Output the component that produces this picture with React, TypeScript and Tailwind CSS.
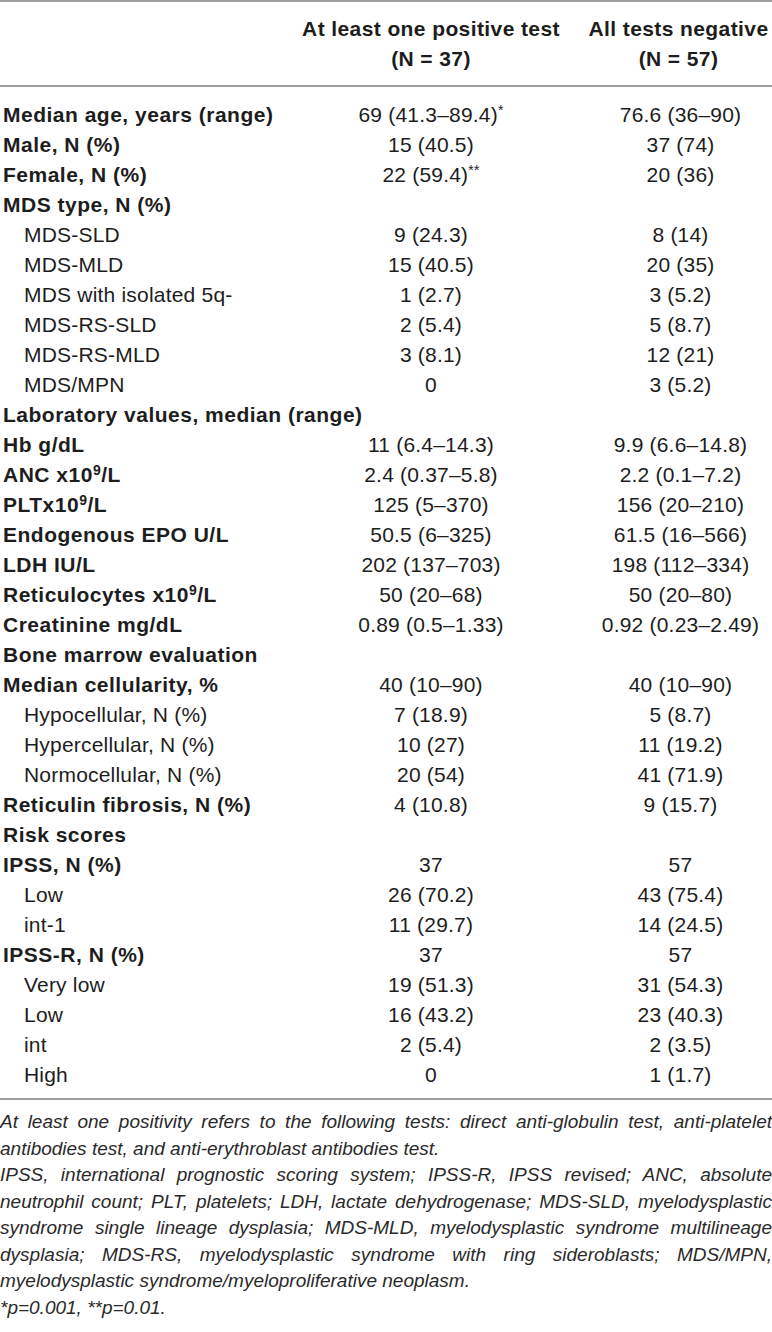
type Row = {
	label: React.ReactNode;
	a?: React.ReactNode;
	b?: React.ReactNode;
	bold?: boolean;
	indent?: boolean;
};

const Sup9 = () => <sup className="text-[14px]">9</sup>;
const Star = ({ n }: { n: string }) => <sup className="text-[14px]">{n}</sup>;

const rows: Row[] = [
	{ label: "Median age, years (range)", a: <>69 (41.3–89.4)<Star n="*" /></>, b: "76.6 (36–90)", bold: true },
	{ label: "Male, N (%)", a: "15 (40.5)", b: "37 (74)", bold: true },
	{ label: "Female, N (%)", a: <>22 (59.4)<Star n="**" /></>, b: "20 (36)", bold: true },
	{ label: "MDS type, N (%)", bold: true },
	{ label: "MDS-SLD", a: "9 (24.3)", b: "8 (14)", indent: true },
	{ label: "MDS-MLD", a: "15 (40.5)", b: "20 (35)", indent: true },
	{ label: "MDS with isolated 5q-", a: "1 (2.7)", b: "3 (5.2)", indent: true },
	{ label: "MDS-RS-SLD", a: "2 (5.4)", b: "5 (8.7)", indent: true },
	{ label: "MDS-RS-MLD", a: "3 (8.1)", b: "12 (21)", indent: true },
	{ label: "MDS/MPN", a: "0", b: "3 (5.2)", indent: true },
	{ label: "Laboratory values, median (range)", bold: true },
	{ label: "Hb g/dL", a: "11 (6.4–14.3)", b: "9.9 (6.6–14.8)", bold: true },
	{ label: <>ANC x10<Sup9 />/L</>, a: "2.4 (0.37–5.8)", b: "2.2 (0.1–7.2)", bold: true },
	{ label: <>PLTx10<Sup9 />/L</>, a: "125 (5–370)", b: "156 (20–210)", bold: true },
	{ label: "Endogenous EPO U/L", a: "50.5 (6–325)", b: "61.5 (16–566)", bold: true },
	{ label: "LDH IU/L", a: "202 (137–703)", b: "198 (112–334)", bold: true },
	{ label: <>Reticulocytes x10<Sup9 />/L</>, a: "50 (20–68)", b: "50 (20–80)", bold: true },
	{ label: "Creatinine mg/dL", a: "0.89 (0.5–1.33)", b: "0.92 (0.23–2.49)", bold: true },
	{ label: "Bone marrow evaluation", bold: true },
	{ label: "Median cellularity, %", a: "40 (10–90)", b: "40 (10–90)", bold: true },
	{ label: "Hypocellular, N (%)", a: "7 (18.9)", b: "5 (8.7)", indent: true },
	{ label: "Hypercellular, N (%)", a: "10 (27)", b: "11 (19.2)", indent: true },
	{ label: "Normocellular, N (%)", a: "20 (54)", b: "41 (71.9)", indent: true },
	{ label: "Reticulin fibrosis, N (%)", a: "4 (10.8)", b: "9 (15.7)", bold: true },
	{ label: "Risk scores", bold: true },
	{ label: "IPSS, N (%)", a: "37", b: "57", bold: true },
	{ label: "Low", a: "26 (70.2)", b: "43 (75.4)", indent: true },
	{ label: "int-1", a: "11 (29.7)", b: "14 (24.5)", indent: true },
	{ label: "IPSS-R, N (%)", a: "37", b: "57", bold: true },
	{ label: "Very low", a: "19 (51.3)", b: "31 (54.3)", indent: true },
	{ label: "Low", a: "16 (43.2)", b: "23 (40.3)", indent: true },
	{ label: "int", a: "2 (5.4)", b: "2 (3.5)", indent: true },
	{ label: "High", a: "0", b: "1 (1.7)", indent: true },
];

// footnote lines kept as in the print so the breaks match
const notes: string[][] = [
	[
		"At least one positivity refers to the following tests: direct anti-globulin test, anti-platelet",
		"antibodies test, and anti-erythroblast antibodies test.",
	],
	[
		"IPSS, international prognostic scoring system; IPSS-R, IPSS revised; ANC, absolute",
		"neutrophil count; PLT, platelets; LDH, lactate dehydrogenase; MDS-SLD, myelodysplastic",
		"syndrome single lineage dysplasia; MDS-MLD, myelodysplastic syndrome multilineage",
		"dysplasia; MDS-RS, myelodysplastic syndrome with ring sideroblasts; MDS/MPN,",
		"myelodysplastic syndrome/myeloproliferative neoplasm.",
	],
	["*p=0.001, **p=0.01."],
];

const App = () => {
	return (
		<div className="w-[772px] h-[1332px] bg-white text-[#1d1d1d] font-['Liberation_Sans',Arial,sans-serif] overflow-hidden">
			<div className="border-t-2 border-b-2 border-[#a0a0a0] grid grid-cols-[293px_276px_203px] pt-[12px] pb-[11px] text-[21px] leading-[30px] font-bold tracking-[0.4px]">
				<div></div>
				<div className="text-center">
					<div>At least one positive test</div>
					<div>(N = 37)</div>
				</div>
				<div className="text-center pl-[16px]">
					<div>All tests negative</div>
					<div>(N = 57)</div>
				</div>
			</div>
			<div className="pt-[13px] pb-[8px] border-b-2 border-[#a0a0a0]">
				{rows.map((r, i) => (
					<div key={i} className="grid grid-cols-[293px_276px_203px] h-[30px] items-center text-[21px] leading-[30px] tracking-[0.2px]">
						<div className={(r.bold ? "font-bold pl-[3px] tracking-[0.5px]" : "pl-[24px]") + " whitespace-nowrap"}>{r.label}</div>
						<div className="text-center whitespace-nowrap">{r.a}</div>
						<div className="text-center pl-[20px] whitespace-nowrap">{r.b}</div>
					</div>
				))}
			</div>
			<div className="pt-[9px] italic text-[19px] leading-[26.5px] text-[#2a2a2a]">
				{notes.map((p, i) => (
					<div key={i}>
						{p.map((line, j) => (
							<div
								key={j}
								className={j < p.length - 1 ? "text-justify [text-align-last:justify] whitespace-nowrap" : "whitespace-nowrap"}
							>
								{line}
							</div>
						))}
					</div>
				))}
			</div>
		</div>
	);
};

export default App;
